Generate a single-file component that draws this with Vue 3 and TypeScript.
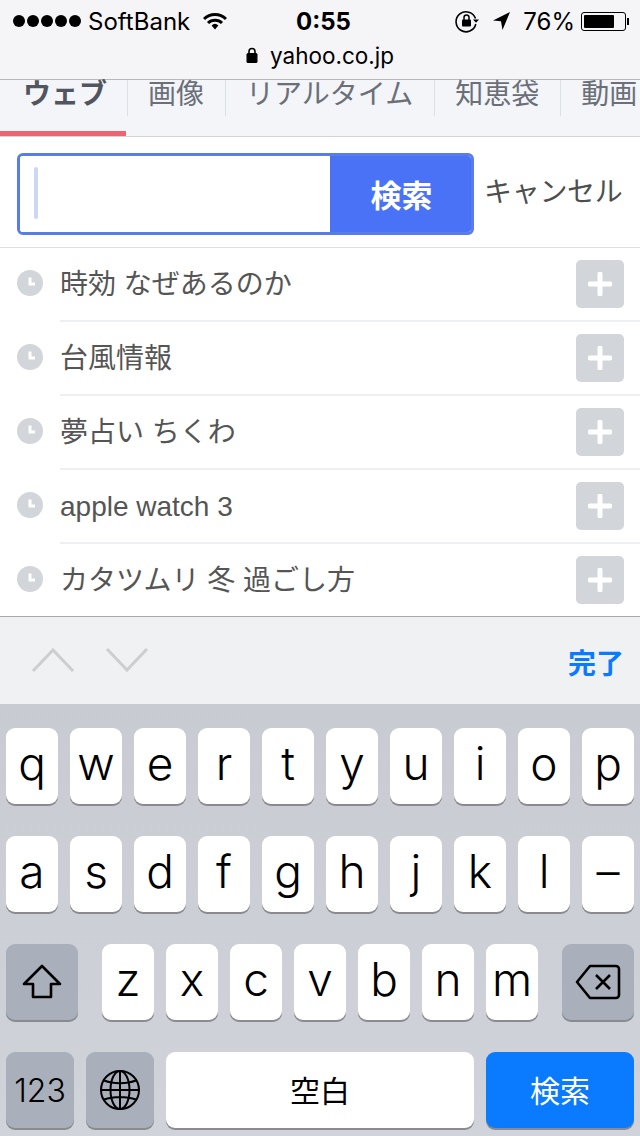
<template>
  <div class="screen">
    <header class="chrome">
      <div class="status">
        <div class="status-left">
          <div class="dots"><i v-for="n in 5" :key="n"></i></div>
          <span class="carrier">SoftBank</span>
          <svg class="wifi" width="24" height="18" viewBox="0 0 24 18">
            <path d="M1 7a15.5 15.5 0 0 1 22 0" fill="none" stroke="#000" stroke-width="3" />
            <path d="M5 11a10 10 0 0 1 14 0" fill="none" stroke="#000" stroke-width="3" />
            <path d="M8.6 13.4a5 5 0 0 1 6.8 0L12 17.5z" fill="#000" />
          </svg>
        </div>
        <div class="time">0:55</div>
        <div class="status-right">
          <svg width="24" height="24" viewBox="0 0 24 24">
            <path d="M20.5 9.5A10 10 0 1 0 20.8 15" fill="none" stroke="#000" stroke-width="1.6" />
            <path d="M18 10.5h6l-3 3.2z" fill="#000" />
            <rect x="7" y="10.5" width="9" height="7" rx="1" fill="#000" />
            <path d="M9 11V8.5a2.5 2.5 0 0 1 5 0V11" fill="none" stroke="#000" stroke-width="1.5" />
          </svg>
          <svg class="arrow" width="18" height="20" viewBox="0 0 18 20">
            <path d="M18 1L1 9.5l8 .7L10.5 19z" fill="#000" />
          </svg>
          <span class="battery-text">76%</span>
          <div class="battery"><div class="battery-fill"></div></div>
          <div class="battery-nub"></div>
        </div>
      </div>
      <div class="address">
        <svg width="12" height="16" viewBox="0 0 12 16">
          <rect x="0.5" y="6" width="11" height="10" rx="1.5" fill="#000" />
          <path d="M3 7V4.5a3 3 0 0 1 6 0V7" fill="none" stroke="#000" stroke-width="1.6" />
        </svg>
        <span>yahoo.co.jp</span>
      </div>
    </header>

    <nav class="tabs">
      <div class="tab-row">
        <div v-for="(tab, i) in tabs" :key="tab" class="tab" :class="{ 'tab-active': i === 0 }">{{ tab }}</div>
      </div>
      <div class="tab-indicator"></div>
    </nav>

    <section class="search">
      <div class="search-box">
        <div class="search-input"><div class="caret"></div></div>
        <div class="search-btn">検索</div>
      </div>
      <div class="cancel">キャンセル</div>
    </section>

    <ul class="history">
      <li v-for="item in history" :key="item" class="row">
        <div class="row-icon">
          <svg width="26" height="26" viewBox="0 0 26 26">
            <circle cx="13" cy="13" r="13" fill="#d2d5da" />
            <path d="M13 7.5v6.5h5" fill="none" stroke="#fff" stroke-width="3" />
          </svg>
        </div>
        <div class="row-body">
          <span class="row-text">{{ item }}</span>
          <div class="plus">
            <svg width="24" height="24" viewBox="0 0 24 24">
              <path d="M12 2v20M2 12h20" stroke="#fff" stroke-width="5" stroke-linecap="round" />
            </svg>
          </div>
        </div>
      </li>
    </ul>

    <div class="accessory">
      <div class="chevrons">
        <svg width="44" height="24" viewBox="0 0 44 24">
          <path d="M2 23L22 2l20 21" fill="none" stroke="#cdced1" stroke-width="3" />
        </svg>
        <svg width="44" height="24" viewBox="0 0 44 24">
          <path d="M2 1l20 21L42 1" fill="none" stroke="#cdced1" stroke-width="3" />
        </svg>
      </div>
      <div class="done">完了</div>
    </div>

    <div class="keyboard">
      <div v-for="(row, r) in letterRows" :key="r" class="key-row">
        <div v-for="k in row" :key="k" class="key">{{ k }}</div>
      </div>
      <div class="key-row row-three">
        <div class="key key-dark key-mod">
          <svg width="40" height="36" viewBox="0 0 40 36">
            <path d="M20 2L2 20h9v13h18V20h9z" fill="none" stroke="#000" stroke-width="2.6" stroke-linejoin="round" />
          </svg>
        </div>
        <div class="key-group">
          <div v-for="k in bottomLetters" :key="k" class="key">{{ k }}</div>
        </div>
        <div class="key key-dark key-mod">
          <svg width="46" height="36" viewBox="0 0 46 36">
            <path d="M15 2h26a3 3 0 0 1 3 3v26a3 3 0 0 1-3 3H15L2 18z" fill="none" stroke="#000" stroke-width="2.6" stroke-linejoin="round" />
            <path d="M21 11l14 14M35 11L21 25" stroke="#000" stroke-width="2.6" />
          </svg>
        </div>
      </div>
      <div class="key-row row-four">
        <div class="key key-dark key-num">123</div>
        <div class="key key-dark key-globe">
          <svg width="42" height="42" viewBox="0 0 42 42" fill="none" stroke="#000" stroke-width="2">
            <circle cx="21" cy="21" r="19" />
            <ellipse cx="21" cy="21" rx="9.5" ry="19" />
            <path d="M21 2v38M2 21h38M5 11.5c9 3.5 23 3.5 32 0M5 30.5c9-3.5 23-3.5 32 0" />
          </svg>
        </div>
        <div class="key key-space">空白</div>
        <div class="key key-go">検索</div>
      </div>
    </div>
  </div>
</template>

<script setup lang="ts">
const tabs: string[] = ['ウェブ', '画像', 'リアルタイム', '知恵袋', '動画']

const history: string[] = [
  '時効 なぜあるのか',
  '台風情報',
  '夢占い ちくわ',
  'apple watch 3',
  'カタツムリ 冬 過ごし方',
]

const letterRows: string[][] = [
  ['q', 'w', 'e', 'r', 't', 'y', 'u', 'i', 'o', 'p'],
  ['a', 's', 'd', 'f', 'g', 'h', 'j', 'k', 'l', '–'],
]

const bottomLetters: string[] = ['z', 'x', 'c', 'v', 'b', 'n', 'm']
</script>

<style>
html,
body {
  margin: 0;
  background: #fff;
}
</style>

<style scoped>
.screen {
  width: 640px;
  height: 1136px;
  overflow: hidden;
  display: flex;
  flex-direction: column;
  background: #fff;
  font-family: Inter, "Liberation Sans", "Noto Sans CJK JP", sans-serif;
  color: #000;
}

.chrome {
  height: 79px;
  background: #f5f5f7;
  border-bottom: 1px solid #b9b9bb;
  display: flex;
  flex-direction: column;
}

.status {
  height: 42px;
  display: grid;
  grid-template-columns: 1fr auto 1fr;
  align-items: center;
  font-size: 25px;
}

.status-left {
  display: flex;
  align-items: center;
  padding-left: 13px;
}

.dots {
  display: flex;
  gap: 2px;
}

.dots i {
  width: 12px;
  height: 12px;
  border-radius: 50%;
  background: #000;
}

.carrier {
  margin-left: 7px;
  font-size: 24px;
}

.wifi {
  margin-left: 13px;
}

.time {
  font-weight: 700;
  font-size: 24px;
  padding-left: 7px;
}

.status-right {
  display: flex;
  align-items: center;
  justify-content: flex-end;
  padding-right: 11px;
}

.arrow {
  margin-left: 13px;
}

.battery-text {
  margin-left: 13px;
  margin-right: 6px;
  font-size: 24px;
}

.battery {
  width: 45px;
  height: 19px;
  box-sizing: border-box;
  border: 1px solid #000;
  border-radius: 3px;
  padding: 2px;
}

.battery-fill {
  width: 76%;
  height: 100%;
  background: #000;
  border-radius: 1px;
}

.battery-nub {
  width: 2px;
  height: 7px;
  margin-left: 1px;
  background: #000;
}

.address {
  display: flex;
  align-items: center;
  justify-content: center;
  gap: 12px;
  font-size: 22.5px;
  height: 26px;
}

.tabs {
  background: #f3f5f8;
  border-bottom: 1px solid #d3d4d7;
}

.tab-row {
  display: flex;
  height: 51px;
}

.tab {
  flex: none;
  height: 36px;
  box-sizing: border-box;
  padding: 0 21px 0 20px;
  border-right: 1px solid #dcdfe3;
  font-size: 28px;
  line-height: 28px;
  color: #6a6f78;
  white-space: nowrap;
}

.tab:first-child {
  padding-left: 23px;
  padding-right: 20px;
}

.tab:last-child {
  border-right: none;
}

.tab-active {
  font-weight: 700;
  color: #50555f;
}

.tab-indicator {
  width: 126px;
  height: 5px;
  background: #ea6472;
}

.search {
  display: flex;
  align-items: center;
  padding: 16px 0 12px 17px;
  border-bottom: 1px solid #dfdfe1;
}

.search-box {
  width: 457px;
  height: 82px;
  box-sizing: border-box;
  display: flex;
  border: 3px solid #5a7bea;
  border-radius: 6px;
  overflow: hidden;
}

.search-input {
  flex: 1;
  background: #fff;
  padding: 11px 0 0 14px;
}

.caret {
  width: 4px;
  height: 52px;
  border-radius: 2px;
  background: #ccd7f7;
}

.search-btn {
  width: 141px;
  display: flex;
  align-items: center;
  justify-content: center;
  background: #4a72f6;
  color: #fff;
  font-size: 31px;
  font-weight: 700;
  padding: 0 0 2px 2px;
  box-sizing: border-box;
}

.cancel {
  margin-left: 10px;
  font-size: 28px;
  letter-spacing: -0.3px;
  color: #4e4e4e;
  white-space: nowrap;
  padding-bottom: 8px;
}

.history {
  list-style: none;
  margin: 0;
  padding: 0;
}

.row {
  display: flex;
}

.row-icon {
  width: 60px;
  flex: none;
  box-sizing: border-box;
  padding: 22px 0 0 17px;
}

.row-icon svg {
  display: block;
}

.row-body {
  flex: 1;
  height: 72px;
  display: flex;
  align-items: center;
  justify-content: space-between;
  padding-right: 16px;
  border-bottom: 2px solid #eeeff1;
}

.row:last-child .row-body {
  border-bottom: none;
}

.row-text {
  font-family: "Liberation Sans", "Noto Sans CJK JP", sans-serif;
  font-size: 28px;
  line-height: 28px;
  color: #555;
  padding-top: 1px;
}

.plus {
  width: 48px;
  height: 48px;
  display: flex;
  align-items: center;
  justify-content: center;
  background: #d2d5da;
  border-radius: 5px;
}

.accessory {
  height: 87px;
  border-top: 1px solid #a9a9ab;
  background: #f0f1f3;
  display: flex;
  align-items: center;
  justify-content: space-between;
  padding: 0 16px 0 31px;
}

.chevrons {
  display: flex;
  gap: 30px;
  padding-bottom: 2px;
}

.done {
  font-size: 28px;
  font-weight: 700;
  color: #0a7aff;
  padding-top: 2px;
}

.keyboard {
  flex: 1;
  display: flex;
  flex-direction: column;
  gap: 32px;
  padding: 24px 6px 0;
  background: linear-gradient(#c8cbd2, #d0d4da);
}

.key-row {
  display: grid;
  grid-template-columns: repeat(10, 52px);
  column-gap: 12px;
}

.key {
  height: 76px;
  display: flex;
  align-items: center;
  justify-content: center;
  background: #fff;
  border-radius: 9px;
  box-shadow: 0 2px 0 #898b90;
  font-size: 46px;
  font-weight: 300;
  line-height: 1;
  padding-bottom: 6px;
  box-sizing: border-box;
}

.row-three {
  display: flex;
  justify-content: space-between;
}

.key-group {
  display: flex;
  gap: 12px;
}

.key-group .key {
  width: 52px;
}

.key-dark {
  background: #a9b0bb;
}

.key-mod {
  width: 72px;
  padding-bottom: 0;
}

.row-four {
  display: flex;
  gap: 12px;
}

.key-num {
  width: 68px;
  font-size: 32px;
  padding-top: 2px;
  padding-bottom: 0;
}

.key-globe {
  width: 68px;
  padding-bottom: 0;
}

.key-space {
  width: 308px;
  font-size: 30px;
  font-weight: 400;
  padding-top: 1px;
  padding-bottom: 0;
}

.key-go {
  width: 148px;
  font-size: 30px;
  font-weight: 400;
  padding-top: 1px;
  padding-bottom: 0;
  background: #0a7aff;
  color: #fff;
}
</style>
